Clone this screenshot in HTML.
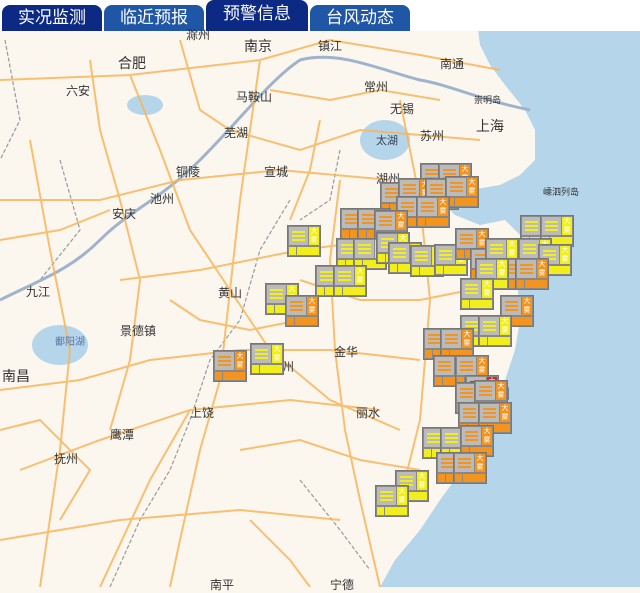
<!DOCTYPE html>
<html><head><meta charset="utf-8"><style>
body{margin:0;width:640px;height:587px;overflow:hidden;background:#fbf7ef;font-family:"Liberation Sans","Noto Sans CJK SC",sans-serif;position:relative}
.tabs{position:absolute;left:0;top:0;width:640px;height:31px;background:#fff}
.tab{position:absolute;top:5px;height:26px;border-radius:8px 8px 0 0;color:#fff;font-size:17px;text-align:center;line-height:26px}
.lbl{position:absolute;font-size:12px;color:#333;white-space:nowrap}
.ic{position:absolute;width:32px;height:30px;background:#888;border:1px solid #777}
.ic .a{position:absolute;left:1px;top:1px;width:19px;height:18px;background:#bbb}
.ic .a i{position:absolute;left:3px;width:13px;height:2px}
.ic .b{position:absolute;left:21px;top:1px;width:10px;height:18px;color:#fff;font-size:7px;line-height:9px;text-align:center}
.ic .c{position:absolute;left:1px;top:21px;width:7px;height:8px}
.ic .d{position:absolute;left:9px;top:21px;width:22px;height:8px}
</style></head><body>
<svg width="640" height="587" style="position:absolute;left:0;top:0">
<path d="M478,30 L640,30 L640,587 L380,587 L395,560 L420,530 L440,500 L462,470 L480,440 L495,410 L505,380 L515,350 L520,320 L518,290 L525,265 L520,235 L505,220 L480,225 L455,215 L440,200 L470,190 L500,185 L520,175 L535,160 L535,130 L525,110 L505,85 L490,65 L480,45 Z" fill="#b5d5ea"/>
<ellipse cx="385" cy="140" rx="25" ry="20" fill="#b5d5ea"/>
<ellipse cx="60" cy="345" rx="28" ry="20" fill="#b5d5ea"/>
<ellipse cx="145" cy="105" rx="18" ry="10" fill="#b5d5ea"/>
<g fill="none" stroke="#999" stroke-width="1.2" stroke-dasharray="4,2">
<path d="M5,40 L20,120 L0,160"/><path d="M60,160 L80,230 L40,280"/><path d="M290,200 L260,250 L240,320 L210,360 L190,420 L170,470 L140,520 L110,587"/><path d="M340,150 L330,200 L300,220"/><path d="M300,480 L340,530 L370,570"/>
</g>
<g fill="none" stroke="#9fb4cc" stroke-width="3">
<path d="M0,300 C40,280 70,270 100,240 C130,210 160,200 200,160 C240,120 270,80 300,60 C340,50 380,70 420,80 C450,85 480,100 530,110"/>
</g>
<g fill="none" stroke="#f9b55a" stroke-width="2" opacity="0.85">
<path d="M0,80 L130,75 L260,60 L330,40 L420,55 L500,70"/>
<path d="M130,75 L160,150 L190,230 L230,290 L270,350 L330,400 L400,430"/>
<path d="M260,60 L250,130 L240,200 L230,290 L220,380 L200,450 L180,540 L170,587"/>
<path d="M0,390 L80,380 L150,360 L240,350 L330,350 L420,360"/>
<path d="M20,470 L100,440 L190,410 L290,400 L380,410"/>
<path d="M340,180 L330,260 L335,350 L345,430 L360,500 L380,587"/>
<path d="M0,200 L100,200 L180,180 L280,170 L390,180"/>
<path d="M0,540 L120,520 L240,510 L340,520"/>
<path d="M30,140 L50,250 L70,350 L60,450 L40,587"/>
<path d="M400,100 L420,200 L430,300 L420,420 L400,500"/>
<path d="M120,280 L200,270 L300,250 L380,240"/>
<path d="M100,587 L150,480 L190,410"/>
<path d="M0,240 L60,230 L110,210"/><path d="M180,40 L200,110 L230,130 L300,150 L360,130 L420,135 L480,140"/>
<path d="M270,90 L330,100 L380,90 L440,100"/><path d="M90,60 L100,130 L120,200 L140,280 L130,360 L110,430"/>
<path d="M300,280 L360,300 L420,300 L470,290"/><path d="M240,450 L300,440 L360,460 L420,470"/>
<path d="M0,430 L40,420 L90,470 L60,520"/><path d="M250,520 L290,560 L310,587"/>
<path d="M170,300 L200,320 L250,330 L300,320"/><path d="M320,120 L310,170 L290,220"/>
</g>
</svg>
<div class="tabs">
<div class="tab" style="left:2px;width:100px;background:#0c2a83">实况监测</div>
<div class="tab" style="left:104px;width:100px;background:#1f56a6">临近预报</div>
<div class="tab" style="left:206px;width:102px;top:0;height:31px;line-height:28px;background:#0c2a83">预警信息</div>
<div class="tab" style="left:310px;width:100px;background:#1f56a6">台风动态</div>
</div>
<div class="lbl" style="left:186px;top:26px">滁州</div>
<div class="lbl" style="left:244px;top:36px;font-size:14px">南京</div>
<div class="lbl" style="left:318px;top:37px">镇江</div>
<div class="lbl" style="left:118px;top:53px;font-size:14px">合肥</div>
<div class="lbl" style="left:440px;top:55px">南通</div>
<div class="lbl" style="left:364px;top:78px">常州</div>
<div class="lbl" style="left:66px;top:82px">六安</div>
<div class="lbl" style="left:236px;top:88px">马鞍山</div>
<div class="lbl" style="left:390px;top:100px">无锡</div>
<div class="lbl" style="left:474px;top:93px;font-size:9px">崇明岛</div>
<div class="lbl" style="left:476px;top:116px;font-size:14px">上海</div>
<div class="lbl" style="left:224px;top:124px">芜湖</div>
<div class="lbl" style="left:420px;top:127px">苏州</div>
<div class="lbl" style="left:376px;top:132px;font-size:11px;color:#345">太湖</div>
<div class="lbl" style="left:176px;top:163px">铜陵</div>
<div class="lbl" style="left:264px;top:163px">宣城</div>
<div class="lbl" style="left:376px;top:170px">湖州</div>
<div class="lbl" style="left:543px;top:185px;font-size:9px">嵊泗列岛</div>
<div class="lbl" style="left:150px;top:190px">池州</div>
<div class="lbl" style="left:112px;top:205px">安庆</div>
<div class="lbl" style="left:26px;top:283px">九江</div>
<div class="lbl" style="left:218px;top:284px">黄山</div>
<div class="lbl" style="left:120px;top:322px">景德镇</div>
<div class="lbl" style="left:55px;top:333px;font-size:10px;color:#57a">鄱阳湖</div>
<div class="lbl" style="left:334px;top:343px">金华</div>
<div class="lbl" style="left:2px;top:366px;font-size:14px">南昌</div>
<div class="lbl" style="left:282px;top:358px">州</div>
<div class="lbl" style="left:496px;top:384px;font-size:14px">州</div>
<div class="lbl" style="left:190px;top:404px">上饶</div>
<div class="lbl" style="left:356px;top:404px">丽水</div>
<div class="lbl" style="left:110px;top:426px">鹰潭</div>
<div class="lbl" style="left:54px;top:450px">抚州</div>
<div class="lbl" style="left:210px;top:576px">南平</div>
<div class="lbl" style="left:330px;top:576px">宁德</div>
<div id="icons"></div>
<script>
var L=[[420,163,'O'],[438,163,'O'],[380,182,'O'],[398,178,'O'],[425,178,'O'],[445,176,'O'],[396,196,'O'],[416,196,'O'],[340,208,'O'],[357,208,'O'],[374,210,'O'],
[287,225,'Y'],[336,238,'Y'],[353,238,'Y'],[376,232,'Y'],[388,242,'Y'],[410,245,'Y'],[434,244,'Y'],[455,228,'O'],[470,248,'O'],[485,238,'Y'],[520,215,'Y'],[540,215,'Y'],[518,238,'Y'],[538,244,'Y'],[498,258,'O'],[515,258,'O'],[475,258,'Y'],
[315,265,'Y'],[333,265,'Y'],[265,283,'Y'],[285,295,'O'],[460,278,'Y'],[500,295,'O'],[460,315,'Y'],[478,315,'Y'],[423,328,'O'],[440,328,'O'],[213,350,'O'],[250,343,'Y'],[433,355,'O'],[455,355,'O'],[465,375,'R'],[455,382,'O'],[474,380,'O'],[458,402,'O'],[478,402,'O'],[422,427,'Y'],[440,427,'Y'],[460,425,'O'],[436,452,'O'],[453,452,'O'],[395,470,'Y'],[375,485,'Y']];
var h='';L.forEach(function(p){var c=p[2]=='Y'?'#f2ee1c':p[2]=='O'?'#f2941e':'#d9262b';
h+='<div class="ic" style="left:'+p[0]+'px;top:'+p[1]+'px"><div class="a"><i style="top:4px;background:'+c+'"></i><i style="top:8px;background:'+c+'"></i><i style="top:12px;background:'+c+'"></i></div><div class="b" style="background:'+c+'">大<br>雾</div><div class="c" style="background:'+c+'"></div><div class="d" style="background:'+c+'"></div></div>';});
document.getElementById('icons').innerHTML=h;
</script>
</body></html>
